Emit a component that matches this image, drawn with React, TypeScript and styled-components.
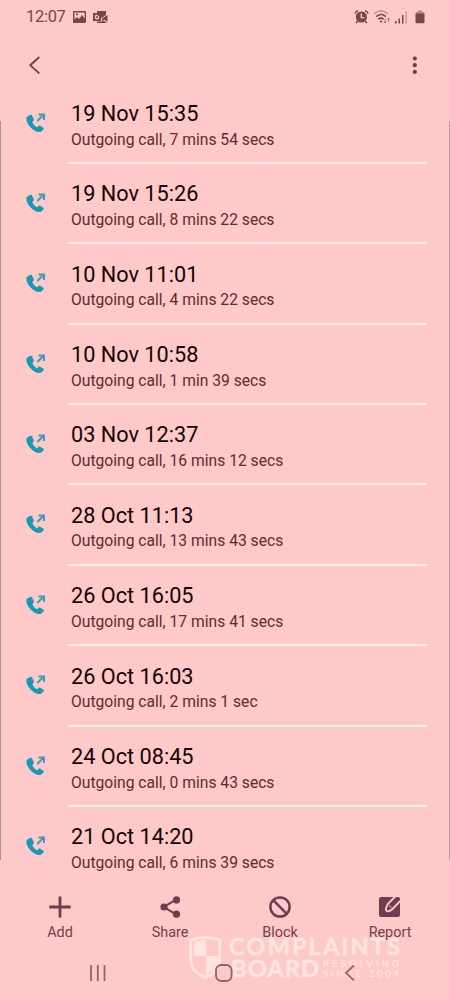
import React from "react";
import styled, { createGlobalStyle } from "styled-components";

const GlobalStyle = createGlobalStyle`
  * { box-sizing: border-box; }
  body { margin: 0; background: #fdc9c9; }
`;

const Screen = styled.div`
  position: relative;
  width: 450px;
  height: 1000px;
  overflow: hidden;
  display: flex;
  flex-direction: column;
  background: #fdc9c9;
  font-family: Roboto, sans-serif;
`;

const StatusBar = styled.header`
  display: flex;
  align-items: center;
  justify-content: space-between;
  height: 34px;
  padding: 0 25px 0 26px;
  color: #744849;
`;

const StatusGroup = styled.div`
  display: flex;
  align-items: center;
`;

const StatusIcons = styled(StatusGroup)`
  gap: 4px;
`;

const Clock = styled.span`
  width: 47px;
  font-size: 16.5px;
  line-height: 20px;
  letter-spacing: -0.3px;
  white-space: nowrap;
`;

const Toolbar = styled.nav`
  display: flex;
  justify-content: space-between;
  height: 49px;
  padding: 21px 30px 0 27px;
  color: #6d3c44;
`;

const IconButton = styled.button`
  display: flex;
  width: 16px;
  height: 20px;
  padding: 0;
  border: 0;
  background: none;
  color: inherit;
`;

const CallList = styled.ul`
  margin: 0;
  padding: 0.6px 0 0;
  list-style: none;
  height: 804px;
`;

const CallRow = styled.li`
  display: flex;
  height: 80.38px;
  padding: 0 23px 0 25px;
`;

const CallIcon = styled.span`
  width: 43px;
  padding-top: 28px;
`;

const CallBody = styled.div<{ $last: boolean }>`
  flex: 1;
  padding: 16.4px 0 0 3px;
  border-bottom: 2px solid ${(p) => (p.$last ? "transparent" : "#fcefee")};
`;

const CallTime = styled.div`
  color: #170306;
  font-size: 21.7px;
  line-height: 28px;
  white-space: nowrap;
`;

const CallDetail = styled.div`
  padding-top: 0.6px;
  color: #67282f;
  font-size: 15.65px;
  line-height: 22px;
  white-space: nowrap;
`;

const Actions = styled.div`
  position: relative;
  z-index: 1;
  display: grid;
  grid-template-columns: repeat(4, 110px);
  height: 61px;
  padding: 8px 5px 0;
`;

const Action = styled.button`
  display: flex;
  flex-direction: column;
  align-items: center;
  gap: 5px;
  padding: 0;
  border: 0;
  background: none;
  color: #703d50;
`;

const ActionLabel = styled.span`
  color: #77404a;
  font-family: Roboto, sans-serif;
  font-size: 14.4px;
  line-height: 18px;
`;

const SystemNav = styled.nav`
  position: relative;
  z-index: 1;
  display: flex;
  justify-content: space-between;
  padding: 12px 90px 0 88px;
  height: 52px;
  color: #936468;
`;

const EdgeLine = styled.i<{ $side: "left" | "right" }>`
  position: absolute;
  top: 121px;
  ${(p) => p.$side}: 0;
  width: 1px;
  height: 739px;
  background: ${(p) => (p.$side === "left" ? "#ad929c" : "#b99c9c")};
`;

const Watermark = styled.div`
  position: absolute;
  left: 188px;
  top: 933px;
  display: flex;
  gap: 6px;
  color: #ffe4df;
  pointer-events: none;

  svg {
    overflow: visible;
  }
`;

const WordMark = styled.text`
  font-family: Lato, sans-serif;
  font-size: 23.7px;
  font-weight: 700;
  stroke: currentColor;
  stroke-width: 0.6px;
`;

const Tagline = styled.text`
  font-family: Lato, sans-serif;
  font-size: 9.8px;
  font-weight: 700;
`;

const calls = [
  ["19 Nov 15:35", "7 mins 54 secs"],
  ["19 Nov 15:26", "8 mins 22 secs"],
  ["10 Nov 11:01", "4 mins 22 secs"],
  ["10 Nov 10:58", "1 min 39 secs"],
  ["03 Nov 12:37", "16 mins 12 secs"],
  ["28 Oct 11:13", "13 mins 43 secs"],
  ["26 Oct 16:05", "17 mins 41 secs"],
  ["26 Oct 16:03", "2 mins 1 sec"],
  ["24 Oct 08:45", "0 mins 43 secs"],
  ["21 Oct 14:20", "6 mins 39 secs"],
];

const NoticeIcons = () => (
  <svg width="38" height="16" viewBox="0 0 38 16" fill="currentColor">
    <path fillRule="evenodd" d="M1 2h11q1 0 1 1v10q0 1-1 1H1q-1 0-1-1V3q0-1 1-1Zm.4 1.5v7L4 8l2 2 3-4 2.6 3.5v-6Z" />
    <circle cx="4" cy="5.3" r="1" />
    <path d="M24 2h9v4l-4 3-5-3Z" />
    <path fillRule="evenodd" d="M20 4h8v8h-8Zm4 1.5a2.3 2.5 0 1 0 0 5 2.3 2.5 0 0 0 0-5Z" />
    <circle cx="24" cy="8" r="1.1" />
    <path d="M29 9.8 34.5 6v7L31 10.5l-2 1.2ZM24 12.5h5l1-1.3 4 2.8H24Z" />
  </svg>
);

const AlarmIcon = () => (
  <svg width="15" height="16" viewBox="0 0 15 16">
    <circle cx="7.4" cy="8" r="5.6" fill="currentColor" />
    <path d="M1 4.4Q1.7 2.4 4 1.8M11 1.8q2.3.6 3 2.6M3.8 12 2 14M11 12l1.8 2" fill="none" stroke="currentColor" strokeWidth="1.6" />
    <path d="M7.3 4.6v4h3" fill="none" stroke="#fdc9c9" strokeWidth="1.4" />
  </svg>
);

const WifiIcon = () => (
  <svg width="18" height="16" viewBox="0 0 18 16" fill="none" stroke="currentColor" strokeWidth="1.6">
    <path d="M1 5Q8 -1.5 15 5" opacity=".45" />
    <path d="M3.2 7.7q4.8-4.4 9.6 0M5.4 10.3q2.6-2.3 5.2 0" />
    <circle cx="8" cy="12.7" r="1.1" fill="currentColor" stroke="none" />
    <path d="M12 10v4M10.8 12.5 12 14l1.2-1.5M15.6 13V9M14.3 10.5 15.6 9l1.2 1.5" strokeWidth="1" opacity=".6" />
  </svg>
);

const SignalIcon = () => (
  <svg width="16" height="16" viewBox="0 0 16 16" fill="currentColor">
    <path d="M0 12h1.6v2.5H0ZM3.5 9.5H5v5H3.5ZM7 6h1.5v8.5H7Z" />
    <path d="M10.5 2.5H12v12h-1.5Z" opacity=".35" />
  </svg>
);

const BatteryIcon = () => (
  <svg width="10" height="16" viewBox="0 0 10 16" fill="currentColor">
    <path d="M3 1.5h4V3h2v2H1V3h2Z" opacity=".5" />
    <path d="M.5 4.5h9V13q0 1.3-1.3 1.3H1.8Q.5 14.3.5 13Z" />
  </svg>
);

const OutgoingIcon = () => (
  <svg width="22" height="22" viewBox="0 0 22 22" fill="none">
    <path d="M5.4 2.8 2.3 4.5C.2 6.5 1.9 11 4.8 14.5c3.4 4.3 8.9 6.8 11.5 5l2.3-2.3c.4-.5.3-1.1-.2-1.5l-3.2-2c-.5-.4-1.2-.3-1.7.2l-1.5 1.4c-1.7-.7-3.9-3-4.7-5.1l1.3-1.8c.3-.5.3-1 .1-1.5L6.9 3.3q-.5-.9-1.5-.5Z" fill="#1999b5" />
    <path d="m12.3 9 6.5-6.5M13.5 2.4H19v5.5" stroke="#3c9eb4" strokeWidth="2" />
  </svg>
);

const actions = [
  {
    label: "Add",
    icon: <path d="M12 1.5v21M1.3 12h21.4" fill="none" stroke="currentColor" strokeWidth="2.8" />,
  },
  {
    label: "Share",
    icon: (
      <>
        <path d="M18 4.7 5.8 12 18 19.3" fill="none" stroke="currentColor" strokeWidth="2" />
        <circle cx="18.5" cy="4.9" r="3.6" fill="currentColor" />
        <circle cx="6" cy="12" r="3.6" fill="currentColor" />
        <circle cx="18.5" cy="19.2" r="3.6" fill="currentColor" />
      </>
    ),
  },
  {
    label: "Block",
    icon: (
      <g fill="none" stroke="currentColor" strokeWidth="2.5">
        <circle cx="12" cy="12" r="9.6" />
        <path d="m5.2 5.2 13.6 13.6" />
      </g>
    ),
  },
  {
    label: "Report",
    icon: (
      <>
        <path d="M3 2h17q2 0 2 2v16q0 2-2 2H3q-2 0-2-2V4q0-2 2-2Z" fill="currentColor" />
        <path d="M22.8 5.4 14.5 14q-3 2.6-5.2 2.3-2.2-.8-.8-4.4l1.4-3L17.8 1" fill="none" stroke="#fdc9c9" strokeWidth="1.9" />
        <path d="m10.8 10.2 2.8 2.6" stroke="#fdc9c9" strokeWidth="1" />
      </>
    ),
  },
];

export default function App() {
  return (
    <Screen>
      <GlobalStyle />
      <StatusBar>
        <StatusGroup>
          <Clock>12:07</Clock>
          <NoticeIcons />
        </StatusGroup>
        <StatusIcons>
          <AlarmIcon />
          <WifiIcon />
          <SignalIcon />
          <BatteryIcon />
        </StatusIcons>
      </StatusBar>
      <Toolbar>
        <IconButton aria-label="Back">
          <svg width="16" height="20" viewBox="0 0 16 20" fill="none" stroke="currentColor" strokeWidth="1.8">
            <path d="m12.3 2-9 8.3 9 8" />
          </svg>
        </IconButton>
        <IconButton aria-label="More options">
          <svg width="16" height="20" viewBox="0 0 16 20" fill="currentColor">
            <circle cx="10.8" cy="3.5" r="2.1" />
            <circle cx="10.8" cy="10.2" r="2.1" />
            <circle cx="10.8" cy="16.9" r="2.1" />
          </svg>
        </IconButton>
      </Toolbar>
      <CallList>
        {calls.map(([time, duration], i) => (
          <CallRow key={time}>
            <CallIcon><OutgoingIcon /></CallIcon>
            <CallBody $last={i === calls.length - 1}>
              <CallTime>{time}</CallTime>
              <CallDetail>Outgoing call, {duration}</CallDetail>
            </CallBody>
          </CallRow>
        ))}
      </CallList>
      <Actions>
        {actions.map(({ label, icon }) => (
          <Action key={label}>
            <svg width="24" height="24" viewBox="0 0 24 24">{icon}</svg>
            <ActionLabel>{label}</ActionLabel>
          </Action>
        ))}
      </Actions>
      <SystemNav>
        <svg width="20" height="26" viewBox="0 0 20 26" fill="none" stroke="currentColor" strokeWidth="1.8">
          <path d="M3 5v16M9.8 5v16M16.5 5v16" />
        </svg>
        <svg width="20" height="26" viewBox="0 0 20 26" fill="none" stroke="currentColor" strokeWidth="1.8">
          <rect x="2" y="5" width="15.6" height="16" rx="5.2" />
        </svg>
        <svg width="20" height="26" viewBox="0 0 20 26" fill="none" stroke="currentColor" strokeWidth="1.8">
          <path d="m14 5.5-8 7.3 8 7.5" />
        </svg>
      </SystemNav>
      <EdgeLine $side="left" />
      <EdgeLine $side="right" />
      <Watermark>
        <svg width="35" height="48" viewBox="0 0 35 48">
          <path d="M17.5 4.5Q24 4.5 31.7 7v20c0 9-6 14-14.2 17.5C9 41 2.8 36 2.8 27V7q8-2.5 14.7-2.5Z" fill="none" stroke="currentColor" strokeWidth="3" />
          <path d="M6 9q6-2 12-2v16H6ZM18 23h12v4c0 7-5 11-12 14Z" fill="currentColor" />
        </svg>
        <svg width="175" height="48" viewBox="0 0 175 48" fill="currentColor">
          <WordMark x="0" y="21.8" textLength="171">COMPLAINTS</WordMark>
          <WordMark x="2" y="43.6" textLength="88">BOARD</WordMark>
          <Tagline x="94" y="34" textLength="76">RESOLVING</Tagline>
          <Tagline x="94" y="44.3" textLength="76">SINCE 2004</Tagline>
        </svg>
      </Watermark>
    </Screen>
  );
}
